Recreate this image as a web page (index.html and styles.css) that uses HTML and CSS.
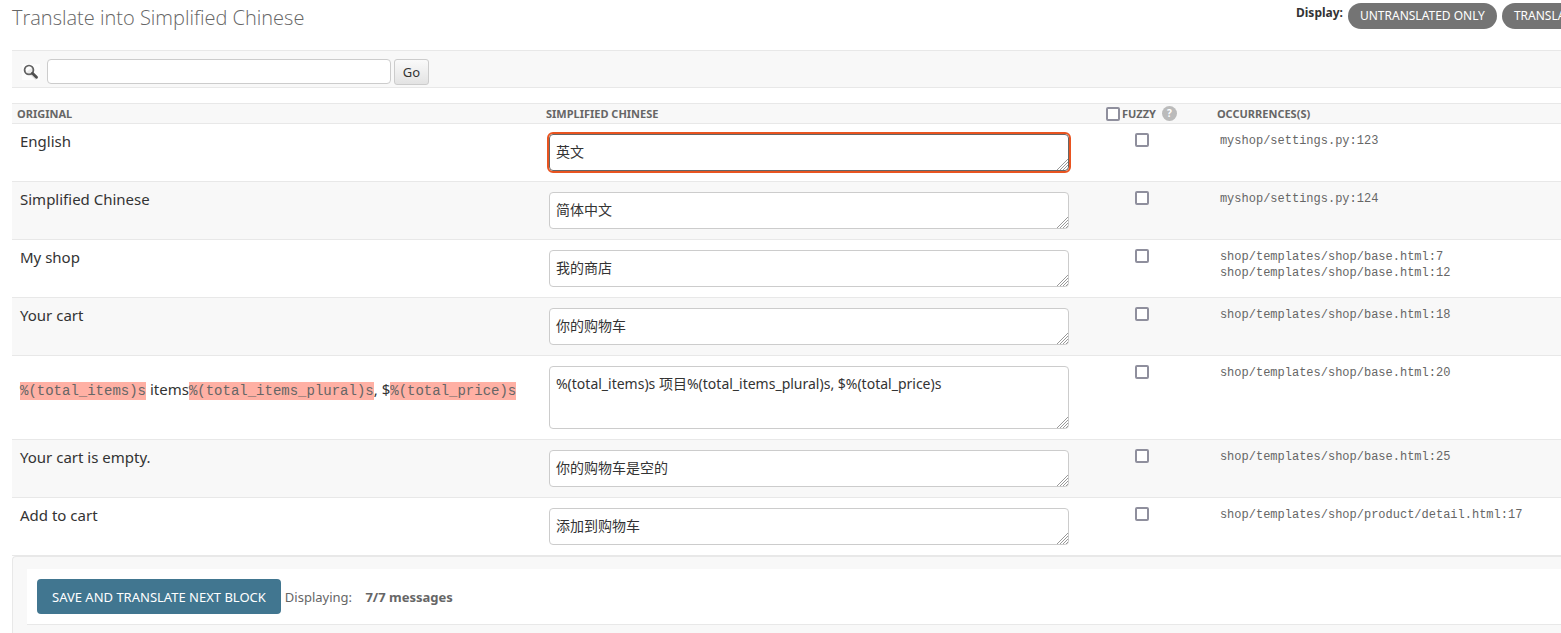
FILE: index.html
```html
<!DOCTYPE html>
<html lang="en">
<head>
<meta charset="utf-8">
<title>Translate into Simplified Chinese</title>
<link rel="stylesheet" href="styles.css">
</head>
<body>
<main class="page">
  <header class="page-header">
    <h1 class="title">Translate into Simplified Chinese</h1>
    <nav class="filters" aria-label="Display">
      <strong class="filters-label">Display:</strong>
      <a class="pill" href="#untranslated">UNTRANSLATED ONLY</a>
      <a class="pill" href="#translated">TRANSLATED ONLY</a>
    </nav>
  </header>

  <form class="search" role="search">
    <label class="search-label" for="query" aria-label="Search">
      <svg width="18" height="16" viewBox="0 0 18 16" aria-hidden="true">
        <rect width="18" height="16" fill="#fdfdfd"/>
        <path d="M9.5 9.5l5.5 5" stroke="#c9c9c9" stroke-width="4" opacity=".5"/>
        <circle cx="7" cy="6" r="4.4" fill="#ececec" stroke="#626262" stroke-width="1.8"/>
        <path d="M3.8 5.5a3.2 3.2 0 0 1 5.6-1.8L4.5 8.2z" fill="#fff"/>
        <path d="M10.4 9.3l4.1 4" stroke="#505050" stroke-width="2.8" stroke-linecap="round"/>
      </svg>
    </label>
    <input class="search-input" id="query" type="text">
    <button class="search-go" type="button">Go</button>
  </form>

  <form class="messages">
    <table class="table">
      <colgroup><col class="col-original"><col class="col-translation"><col class="col-fuzzy"><col></colgroup>
      <thead>
        <tr>
          <th scope="col">ORIGINAL</th>
          <th scope="col">SIMPLIFIED CHINESE</th>
          <th scope="col"><div class="fuzzy-head"><input class="check" id="all" type="checkbox"><label for="all">FUZZY</label><span class="help" title="Mark as fuzzy">?</span></div></th>
          <th scope="col">OCCURRENCES(S)</th>
        </tr>
      </thead>
      <tbody>
        <tr>
          <td class="original"><label for="m1">English</label></td>
          <td class="translation"><textarea class="field field-active" id="m1">英文</textarea></td>
          <td class="fuzzy"><input class="check" type="checkbox" aria-label="Fuzzy: English"></td>
          <td class="places"><code>myshop/settings.py:123</code></td>
        </tr>
        <tr>
          <td class="original"><label for="m2">Simplified Chinese</label></td>
          <td class="translation"><textarea class="field" id="m2">简体中文</textarea></td>
          <td class="fuzzy"><input class="check" type="checkbox" aria-label="Fuzzy: Simplified Chinese"></td>
          <td class="places"><code>myshop/settings.py:124</code></td>
        </tr>
        <tr>
          <td class="original"><label for="m3">My shop</label></td>
          <td class="translation"><textarea class="field" id="m3">我的商店</textarea></td>
          <td class="fuzzy"><input class="check" type="checkbox" aria-label="Fuzzy: My shop"></td>
          <td class="places"><code>shop/templates/shop/base.html:7</code><code>shop/templates/shop/base.html:12</code></td>
        </tr>
        <tr>
          <td class="original"><label for="m4">Your cart</label></td>
          <td class="translation"><textarea class="field" id="m4">你的购物车</textarea></td>
          <td class="fuzzy"><input class="check" type="checkbox" aria-label="Fuzzy: Your cart"></td>
          <td class="places"><code>shop/templates/shop/base.html:18</code></td>
        </tr>
        <tr>
          <td class="original original-block"><label for="m5"><code class="var">%(total_items)s</code> items<code class="var">%(total_items_plural)s</code>, $<code class="var">%(total_price)s</code></label></td>
          <td class="translation"><textarea class="field field-tall" id="m5">%(total_items)s 项目%(total_items_plural)s, $%(total_price)s</textarea></td>
          <td class="fuzzy"><input class="check" type="checkbox" aria-label="Fuzzy: cart total"></td>
          <td class="places"><code>shop/templates/shop/base.html:20</code></td>
        </tr>
        <tr>
          <td class="original"><label for="m6">Your cart is empty.</label></td>
          <td class="translation"><textarea class="field" id="m6">你的购物车是空的</textarea></td>
          <td class="fuzzy"><input class="check" type="checkbox" aria-label="Fuzzy: Your cart is empty."></td>
          <td class="places"><code>shop/templates/shop/base.html:25</code></td>
        </tr>
        <tr>
          <td class="original"><label for="m7">Add to cart</label></td>
          <td class="translation"><textarea class="field" id="m7">添加到购物车</textarea></td>
          <td class="fuzzy"><input class="check" type="checkbox" aria-label="Fuzzy: Add to cart"></td>
          <td class="places"><code>shop/templates/shop/product/detail.html:17</code></td>
        </tr>
      </tbody>
    </table>
    <footer class="submit-row">
      <div class="submit-inner">
        <button class="save" type="button">SAVE AND TRANSLATE NEXT BLOCK</button>
        <span class="status">Displaying: <strong class="count">7/7 messages</strong></span>
      </div>
    </footer>
  </form>
</main>
</body>
</html>
```
FILE: styles.css
```css
* { box-sizing: border-box; }

body {
  margin: 0;
  background: #fff;
  color: #333;
  font: 14px/20px "Noto Sans", "Noto Sans CJK SC", sans-serif;
}

.page {
  display: flex;
  flex-direction: column;
  min-height: 100vh;
  padding-left: 12px;
  overflow: hidden;
}

.page-header {
  display: flex;
  justify-content: space-between;
  height: 50px;
}

.title {
  margin: 0;
  padding-top: 6px;
  color: #666;
  font: 300 20px/24px "Open Sans", sans-serif;
}

/* The filter list runs past the right edge of the page. */
.filters {
  display: flex;
  flex: none;
  gap: 5px;
  margin-right: -72px;
  padding-top: 3px;
  white-space: nowrap;
}

.filters-label { font-size: 12px; }

.pill {
  flex: none;
  height: 26px;
  padding: 0 12px;
  border-radius: 13px;
  background: #747474;
  color: #fff;
  font-size: 12px;
  line-height: 26px;
  text-decoration: none;
}

.search {
  display: flex;
  align-items: flex-start;
  height: 38px;
  margin-bottom: 15px;
  padding: 8px 10px 0;
  border: solid #e8e8e8;
  border-width: 1px 0;
  background: #f8f8f8;
}

.search-label {
  display: flex;
  margin-right: 7px;
  padding-top: 5px;
}

.search-input {
  width: 344px;
  height: 25px;
  padding: 2px 6px;
  border: 1px solid #ccc;
  border-radius: 4px;
  background: #fff;
}

.search-go {
  width: 35px;
  height: 26px;
  margin-left: 3px;
  padding: 0;
  border: 1px solid #ccc;
  border-radius: 3px;
  background: linear-gradient(#fafafa, #e3e3e3);
  color: #333;
  font: 13px/24px "Noto Sans", sans-serif;
}

.messages {
  display: flex;
  flex: 1;
  flex-direction: column;
}

.table {
  width: 100%;
  border-spacing: 0;
  table-layout: fixed;
}

.col-original { width: 34.15%; }
.col-translation { width: 36.15%; }
.col-fuzzy { width: 111px; }

.table th {
  height: 21px;
  padding: 0 5px;
  border: solid #e8e8e8;
  border-width: 1px 0;
  background: #f8f8f8;
  color: #666;
  font-size: 11px;
  line-height: 19px;
  text-align: left;
}

.table td {
  padding: 8px;
  border-bottom: 1px solid #e8e8e8;
  vertical-align: top;
}

.table tbody tr:nth-child(even) td { background: #f8f8f8; }

.fuzzy-head {
  display: flex;
  align-items: center;
  gap: 2px;
}

.help {
  width: 15px;
  height: 15px;
  margin-left: 4px;
  border-radius: 50%;
  background: #bbb;
  color: #fff;
  font-size: 10px;
  line-height: 15px;
  text-align: center;
}

.table .original {
  padding: 7px 8px;
  font-size: 15px;
}

.original-block label {
  display: block;
  padding-top: 16px;
  white-space: nowrap;
}

.var {
  padding: 1px 0;
  background: #ffb0a4;
  color: #666;
  font: 14px/16px "Liberation Mono", monospace;
}

.table .translation { padding: 10px 8px; }

.field {
  display: block;
  width: calc(100% - 24px);
  height: 37px;
  padding: 7px 6px;
  overflow: hidden;
  border: 1px solid #ccc;
  border-radius: 4px;
  background: #fff;
  color: #333;
  font: 14px/20px "Noto Sans", "Noto Sans CJK SC", sans-serif;
  resize: vertical;
}

.field::-webkit-resizer {
  background: url("data:image/svg+xml,%3Csvg xmlns='http://www.w3.org/2000/svg' width='11' height='11'%3E%3Cpath d='M0 11L11 0M3 11l8-8M6 11l5-5M9 11l2-2' stroke='%23999'/%3E%3C/svg%3E") right bottom no-repeat;
}

.field-tall { height: 63px; }

.field-active {
  border-color: #666;
  outline: 2px solid #e95420;
}

.check {
  display: block;
  flex: none;
  width: 14px;
  height: 14px;
  margin: 0;
  border: 2px solid #8f8f9d;
  border-radius: 2px;
  background: #fff;
  appearance: none;
}

.table .fuzzy { padding: 9px 34px; }

.table .places { padding-top: 9px; }

.places code {
  display: block;
  color: #666;
  font: 12px/16px "Liberation Mono", monospace;
}

.submit-row {
  flex: 1;
  padding: 12px 14px;
  border: solid #e8e8e8;
  border-width: 1px 0 0 1px;
  border-radius: 4px 0 0;
  background: #f8f8f8;
}

.submit-inner {
  display: flex;
  align-items: center;
  gap: 4px;
  margin-right: -14px;
  padding: 10px;
  border-bottom: 1px solid #e8e8e8;
  background: #fff;
}

.save {
  height: 35px;
  padding: 0 15px;
  border: 0;
  border-radius: 4px;
  background: #417690;
  color: #fff;
  font: 13px/20px "Noto Sans", sans-serif;
}

.status {
  color: #666;
  font-size: 13px;
}

.count { margin-left: 10px; }
```
